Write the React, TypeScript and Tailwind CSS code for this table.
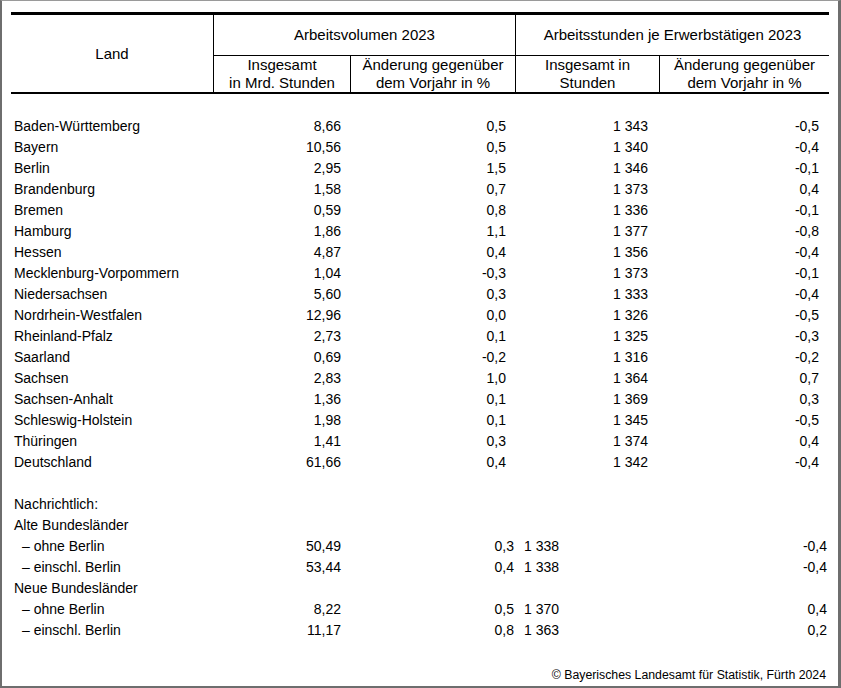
import React from "react";

const rows: [string, string, string, string, string][] = [
  ["Baden-Württemberg", "8,66", "0,5", "1 343", "-0,5"],
  ["Bayern", "10,56", "0,5", "1 340", "-0,4"],
  ["Berlin", "2,95", "1,5", "1 346", "-0,1"],
  ["Brandenburg", "1,58", "0,7", "1 373", "0,4"],
  ["Bremen", "0,59", "0,8", "1 336", "-0,1"],
  ["Hamburg", "1,86", "1,1", "1 377", "-0,8"],
  ["Hessen", "4,87", "0,4", "1 356", "-0,4"],
  ["Mecklenburg-Vorpommern", "1,04", "-0,3", "1 373", "-0,1"],
  ["Niedersachsen", "5,60", "0,3", "1 333", "-0,4"],
  ["Nordrhein-Westfalen", "12,96", "0,0", "1 326", "-0,5"],
  ["Rheinland-Pfalz", "2,73", "0,1", "1 325", "-0,3"],
  ["Saarland", "0,69", "-0,2", "1 316", "-0,2"],
  ["Sachsen", "2,83", "1,0", "1 364", "0,7"],
  ["Sachsen-Anhalt", "1,36", "0,1", "1 369", "0,3"],
  ["Schleswig-Holstein", "1,98", "0,1", "1 345", "-0,5"],
  ["Thüringen", "1,41", "0,3", "1 374", "0,4"],
  ["Deutschland", "61,66", "0,4", "1 342", "-0,4"],
];

type NRow = { label: string; indent?: boolean; v?: [string, string, string, string] };
const nrows: NRow[] = [
  { label: "Nachrichtlich:" },
  { label: "Alte Bundesländer" },
  { label: "– ohne Berlin", indent: true, v: ["50,49", "0,3", "1 338", "-0,4"] },
  { label: "– einschl. Berlin", indent: true, v: ["53,44", "0,4", "1 338", "-0,4"] },
  { label: "Neue Bundesländer" },
  { label: "– ohne Berlin", indent: true, v: ["8,22", "0,5", "1 370", "0,4"] },
  { label: "– einschl. Berlin", indent: true, v: ["11,17", "0,8", "1 363", "0,2"] },
];

const cols = "grid grid-cols-[203px_137px_165px_144px_169px]";

export default function App() {
  return (
    <div
      className="w-[841px] h-[688px] box-border bg-white border-t border-t-[#9a9a9a] border-l-2 border-r-[3px] border-b-2 border-l-[#6e6e6e] border-r-[#6e6e6e] border-b-[#6e6e6e] overflow-hidden text-[14px] text-black"
      style={{ fontFamily: '"Liberation Sans", Arial, sans-serif' }}
    >
      <div className="pl-[9px] pt-[11px] w-[827px]">
        {/* Header */}
        <div className={`${cols} grid-rows-[41px_36px] border-t-[3px] border-b-2 border-black leading-[18px] text-[15px]`}>
          <div className="row-span-2 border-r border-black flex items-center justify-center">Land</div>
          <div className="col-span-2 border-r border-b border-black flex items-center justify-center">Arbeitsvolumen 2023</div>
          <div className="col-span-2 border-b border-black flex items-center justify-center">
            Arbeitsstunden je Erwerbstätigen 2023
          </div>
          <div className="border-r border-black flex flex-col items-center justify-center">
            <span>Insgesamt</span>
            <span>in Mrd. Stunden</span>
          </div>
          <div className="border-r border-black flex flex-col items-center justify-center">
            <span>Änderung gegenüber</span>
            <span>dem Vorjahr in %</span>
          </div>
          <div className="border-r border-black flex flex-col items-center justify-center">
            <span>Insgesamt in</span>
            <span>Stunden</span>
          </div>
          <div className="flex flex-col items-center justify-center">
            <span>Änderung gegenüber</span>
            <span>dem Vorjahr in %</span>
          </div>
        </div>

        {/* Body */}
        <div className="pt-[22px] leading-[21px]">
          {rows.map((r, i) => (
            <div key={i} className={`${cols} h-[21px]`}>
              <div className="pl-[3px] whitespace-nowrap">{r[0]}</div>
              <div className="text-right pr-[10px]">{r[1]}</div>
              <div className="text-right pr-[10px]">{r[2]}</div>
              <div className="text-right pr-[12px]">{r[3]}</div>
              <div className="text-right pr-[10px]">{r[4]}</div>
            </div>
          ))}
          <div className="h-[21px]" />
          {nrows.map((r, i) => (
            <div key={i} className={`${cols} h-[21px]`}>
              <div className={`whitespace-nowrap ${r.indent ? "pl-[11px]" : "pl-[3px]"}`}>{r.label}</div>
              {r.v ? (
                <>
                  <div className="text-right pr-[10px]">{r.v[0]}</div>
                  <div className="text-right pr-[2px]">{r.v[1]}</div>
                  <div className="text-left pl-[8px]">{r.v[2]}</div>
                  <div className="text-right pr-[2px]">{r.v[3]}</div>
                </>
              ) : (
                <>
                  <div />
                  <div />
                  <div />
                  <div />
                </>
              )}
            </div>
          ))}
        </div>

        <div className="mt-[24px] h-[21px] leading-[21px] text-right pr-[3px] text-[12.3px]">
          © Bayerisches Landesamt für Statistik, Fürth 2024
        </div>
      </div>
    </div>
  );
}
